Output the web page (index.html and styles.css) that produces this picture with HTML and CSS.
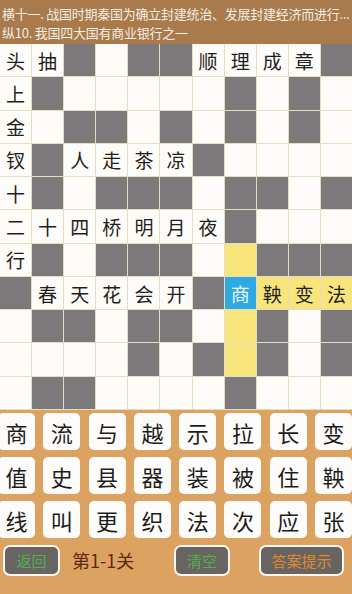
FILE: index.html
```html
<!DOCTYPE html>
<html lang="zh">
<head>
<meta charset="utf-8">
<link rel="stylesheet" href="styles.css">
</head>
<body>
<div class="app">
  <header class="clues">
    <div class="clue">横十一. 战国时期秦国为确立封建统治、发展封建经济而进行...</div>
    <div class="clue">纵10. 我国四大国有商业银行之一</div>
  </header>
  <div class="grid">
    <div class="c">头</div><div class="c">抽</div><div class="d"></div><div class="c"></div><div class="d"></div><div class="d"></div><div class="c">顺</div><div class="c">理</div><div class="c">成</div><div class="c">章</div><div class="d"></div>
    <div class="c">上</div><div class="d"></div><div class="c"></div><div class="c"></div><div class="c"></div><div class="c"></div><div class="c"></div><div class="d"></div><div class="c"></div><div class="d"></div><div class="c"></div>
    <div class="c">金</div><div class="c"></div><div class="d"></div><div class="d"></div><div class="c"></div><div class="d"></div><div class="c"></div><div class="d"></div><div class="c"></div><div class="d"></div><div class="c"></div>
    <div class="c">钗</div><div class="d"></div><div class="c">人</div><div class="c">走</div><div class="c">茶</div><div class="c">凉</div><div class="d"></div><div class="c"></div><div class="c"></div><div class="c"></div><div class="c"></div>
    <div class="c">十</div><div class="d"></div><div class="c"></div><div class="d"></div><div class="d"></div><div class="d"></div><div class="c"></div><div class="d"></div><div class="d"></div><div class="c"></div><div class="d"></div>
    <div class="c">二</div><div class="c">十</div><div class="c">四</div><div class="c">桥</div><div class="c">明</div><div class="c">月</div><div class="c">夜</div><div class="d"></div><div class="c"></div><div class="c"></div><div class="c"></div>
    <div class="c">行</div><div class="d"></div><div class="c"></div><div class="d"></div><div class="d"></div><div class="d"></div><div class="c"></div><div class="y"></div><div class="d"></div><div class="d"></div><div class="d"></div>
    <div class="d"></div><div class="c">春</div><div class="c">天</div><div class="c">花</div><div class="c">会</div><div class="c">开</div><div class="d"></div><div class="b">商</div><div class="y">鞅</div><div class="y">变</div><div class="y">法</div>
    <div class="c"></div><div class="d"></div><div class="d"></div><div class="c"></div><div class="d"></div><div class="d"></div><div class="c"></div><div class="y"></div><div class="d"></div><div class="c"></div><div class="d"></div>
    <div class="c"></div><div class="c"></div><div class="c"></div><div class="c"></div><div class="d"></div><div class="c"></div><div class="d"></div><div class="y"></div><div class="d"></div><div class="c"></div><div class="d"></div>
    <div class="c"></div><div class="d"></div><div class="d"></div><div class="c"></div><div class="c"></div><div class="c"></div><div class="c"></div><div class="d"></div><div class="c"></div><div class="c"></div><div class="c"></div>
  </div>
  <div class="board">
    <div class="keys">
      <div class="key">商</div><div class="key">流</div><div class="key">与</div><div class="key">越</div><div class="key">示</div><div class="key">拉</div><div class="key">长</div><div class="key">变</div>
      <div class="key">值</div><div class="key">史</div><div class="key">县</div><div class="key">器</div><div class="key">装</div><div class="key">被</div><div class="key">住</div><div class="key">鞅</div>
      <div class="key">线</div><div class="key">叫</div><div class="key">更</div><div class="key">织</div><div class="key">法</div><div class="key">次</div><div class="key">应</div><div class="key">张</div>
    </div>
    <div class="bar">
      <div class="btn btn-back green">返回</div>
      <div class="level">第1-1关</div>
      <div class="btn btn-clear green">清空</div>
      <div class="btn btn-hint orange">答案提示</div>
    </div>
  </div>
</div>
</body>
</html>
```

FILE: styles.css
```css
* { box-sizing: border-box; }
html, body { margin: 0; padding: 0; }
body {
  width: 352px;
  height: 594px;
  overflow: hidden;
  font-family: "Noto Sans CJK SC", "Noto Sans", sans-serif;
  background: #dba262;
}
.app {
  display: flex;
  flex-direction: column;
  width: 352px;
  height: 594px;
}
.clues {
  height: 44px;
  background: #a87a4c;
  color: #f6eee0;
  padding: 5px 0 0 2px;
  display: flex;
  flex-direction: column;
  gap: 1px;
}
.clue {
  font-size: 13px;
  line-height: 18px;
  white-space: nowrap;
  letter-spacing: -0.25px;
}
.grid {
  height: 366px;
  display: grid;
  grid-template-columns: repeat(11, 1fr);
  grid-template-rows: repeat(11, 1fr);
  gap: 1px;
  background: #e6dcc6;
  border-bottom: 1px solid #e6dcc6;
}
.grid > div {
  display: flex;
  align-items: center;
  justify-content: center;
  font-size: 19px;
  color: #1e1e1e;
}
.grid .c { background: #fdfcf8; }
.grid .d { background: #7b7979; }
.grid .y { background: #f7e57c; }
.grid .b { background: #2fa9e1; color: #eaf6fd; }
.board {
  flex: 1;
  display: flex;
  flex-direction: column;
  background: #dba262;
}
.keys {
  display: grid;
  grid-template-columns: repeat(8, 37px);
  grid-auto-rows: 37px;
  column-gap: 8.3px;
  row-gap: 7px;
  margin: 3px 0 0 -2px;
}
.key {
  background: #fdfcfa;
  border-radius: 5px;
  display: flex;
  align-items: center;
  justify-content: center;
  font-size: 22px;
  color: #1c1c1c;
}
.bar {
  display: flex;
  align-items: center;
  margin-top: 6px;
  padding-left: 3px;
  height: 32px;
}
.btn {
  height: 31px;
  background: #676462;
  border: 2px solid #fbf6ee;
  border-radius: 7px;
  display: flex;
  align-items: center;
  justify-content: center;
  font-size: 15px;
}
.green { color: #4fb24f; }
.orange { color: #e08a2e; }
.btn-back { width: 57px; }
.level {
  font-size: 18px;
  color: #5b2a0c;
  margin-left: 12px;
  width: 102px;
}
.btn-clear { width: 56px; }
.btn-hint { width: 85px; margin-left: 29px; }
```
